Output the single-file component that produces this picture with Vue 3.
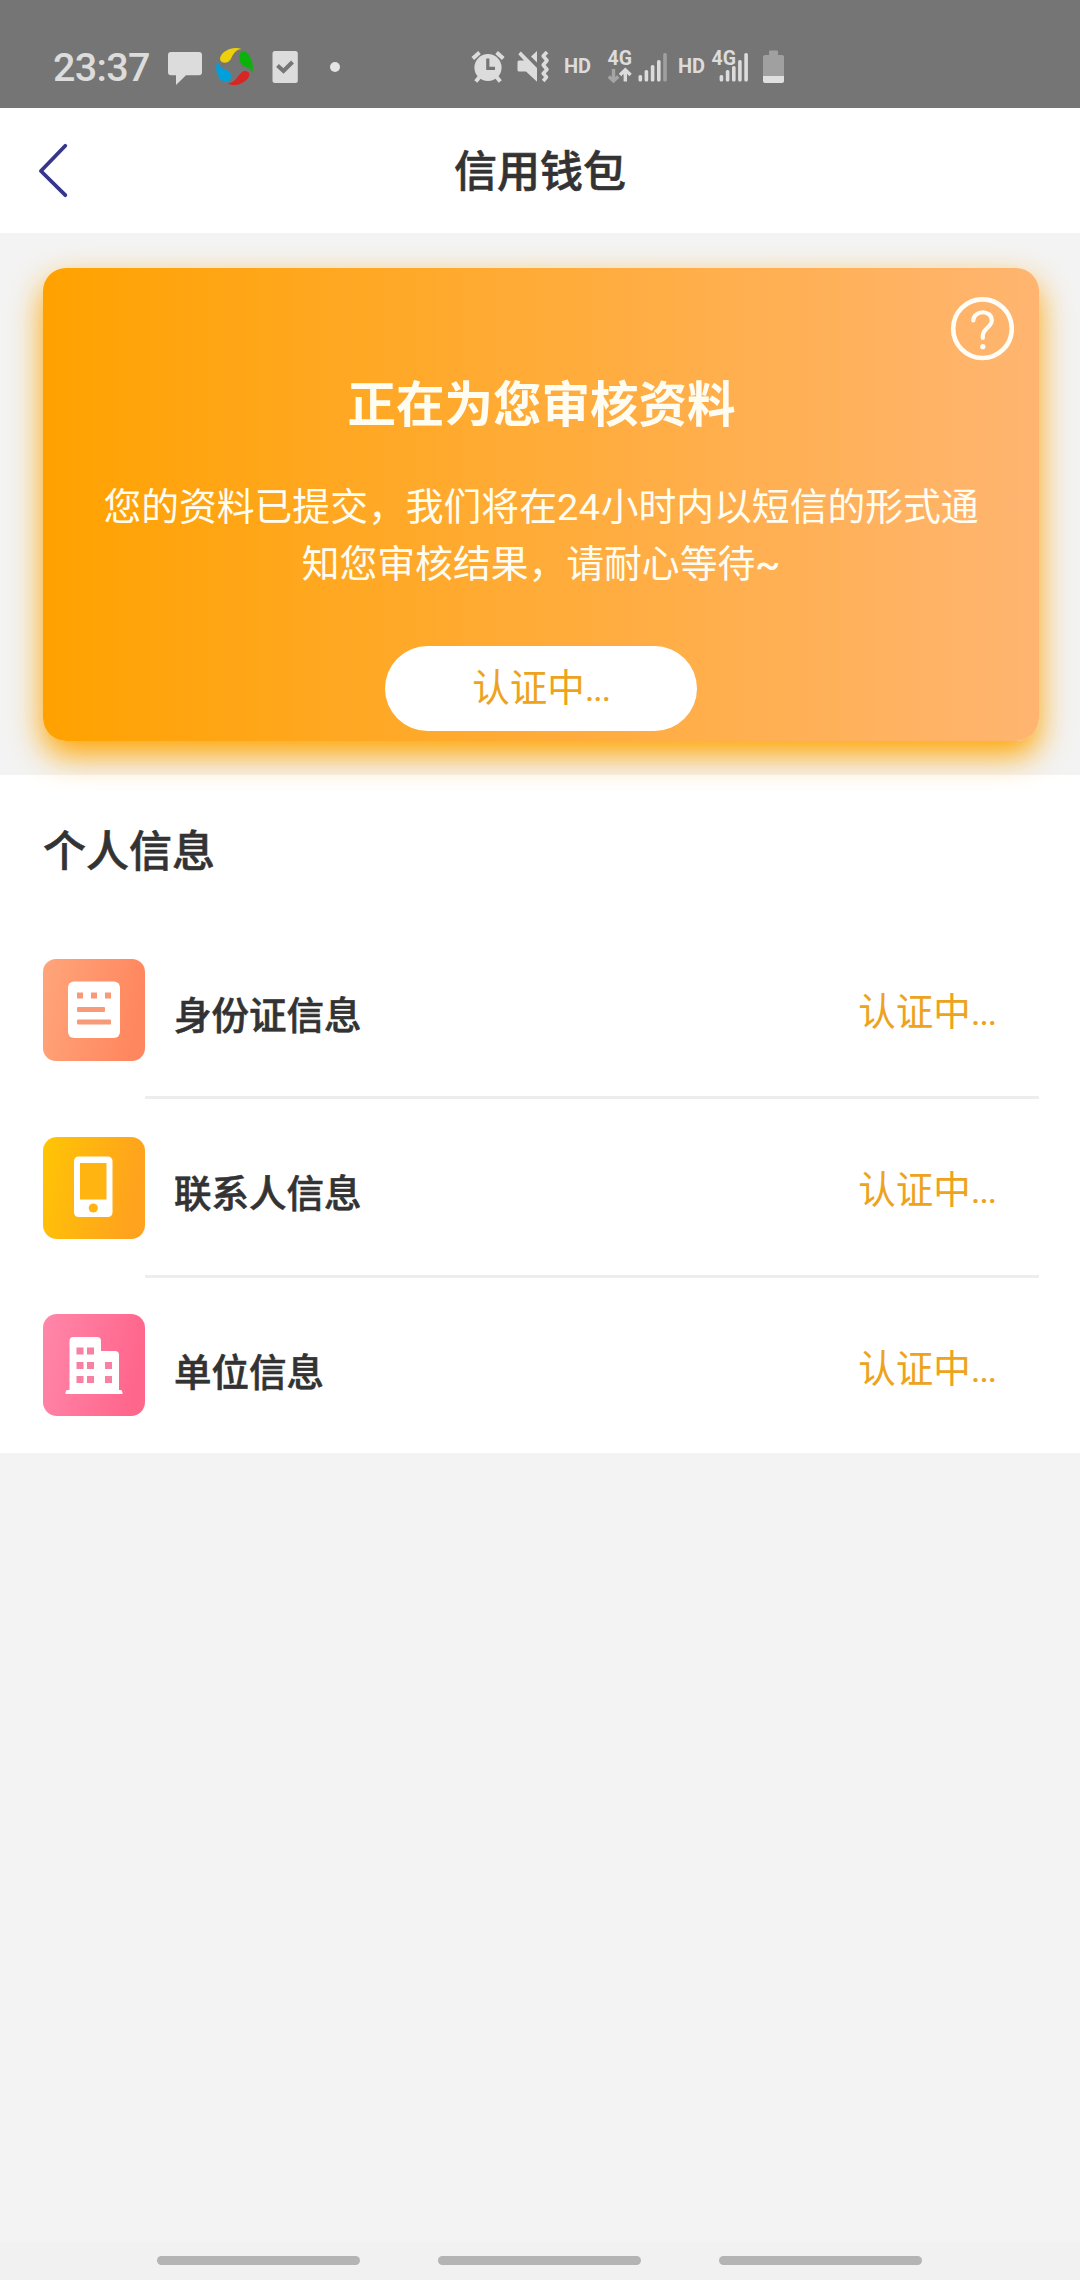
<script setup>
const rows = [
  { key: 'id', label: '身份证信息' },
  { key: 'contact', label: '联系人信息' },
  { key: 'company', label: '单位信息' },
]
</script>

<template>
  <div class="page">
    <div class="status-bar">
      <span class="time">23:37</span>
      <svg class="bubble" width="36" height="40" viewBox="167 48 36 40">
        <path d="M171 52H199Q202 52 202 55V72Q202 75.300 199 75.300H186L176 85V75.300H171Q168 75.300 168 72V55Q168 52 171 52Z" fill="#dcdcdc" />
      </svg>
      <svg class="wheel" width="40" height="40" viewBox="215 48 40 40">
        <path d="M241.500 49C234 46 222.500 50 220.200 57.500C218.800 63 227 65 230.500 59.500C233 55.500 234 50 241.500 49Z" fill="#ebd00b" />
        <path d="M239.500 55C240 50.500 245.500 50.500 248.500 54.500C252.500 60 254 67.500 252 73.500C251 67 247 68.500 243 65.500C239.500 62.500 239 59 239.500 55Z" fill="#0cb20c" />
        <path d="M228 83.500C234 87 243.500 84.500 248.500 77.500C251.500 72.500 246 69 241.500 72.500C237 76.500 236 82 228 83.500Z" fill="#d82626" />
        <path d="M217.800 60.500C214.500 67.500 216.500 76.500 222.500 81C227.500 84 231.500 80 231 75.500C230 69.500 225 70.500 221.500 67.500C219 65.500 218 63.500 217.800 60.500Z" fill="#00a0dc" />
      </svg>
      <svg class="task" width="28" height="40" viewBox="271 48 28 40">
        <rect x="272.500" y="51" width="25.300" height="32" rx="2.500" fill="#dcdcdc" />
        <path d="M277.500 65.500L283.500 71L292.500 62" fill="none" stroke="#757575" stroke-width="4" />
      </svg>
      <span class="dot"></span>
      <svg class="alarm" width="36" height="40" viewBox="470 48 36 40">
        <g fill="none" stroke="#dcdcdc" stroke-width="4">
          <path d="M472.800 58.500L479.500 52.500M503.300 58.500L496.600 52.500M479.500 77L475.800 81.500M496.600 77L500.300 81.500" />
        </g>
        <circle cx="488" cy="67.500" r="13.600" fill="#dcdcdc" />
        <path d="M487.800 58.500V68.300H495" fill="none" stroke="#757575" stroke-width="3.200" />
      </svg>
      <svg class="mute" width="36" height="40" viewBox="515 48 36 40">
        <path d="M517.500 62Q517.500 60.500 519 60.500H524L518.300 54.200L520.800 51.500L537 68V81.700L526 71.500H519Q517.500 71.500 517.500 70Z M531 56.500L537 51V62.500Z" fill="#dcdcdc" />
        <path d="M547 52L543.200 56L547 60.500L543.200 65L547 69.500L543.200 73.500L546.500 77L543.200 81" fill="none" stroke="#dcdcdc" stroke-width="3.600" stroke-linejoin="round" />
      </svg>
      <span class="hd">HD</span>
      <svg class="signal-a" width="62" height="40" viewBox="606 48 62 40">
        <text x="607.500" y="64.700" class="net">4G</text>
        <path d="M613.500 69V81M608.800 76.500L613.500 81L618.200 76.500" fill="none" stroke="#a5a5a5" stroke-width="3.400" />
        <path d="M625.300 81.500V70M620 75L625.300 69.800L630.600 75" fill="none" stroke="#dcdcdc" stroke-width="3.400" />
        <g fill="#dcdcdc">
          <rect x="638.500" y="75" width="3.600" height="6.500" rx="1.600" />
          <rect x="644.600" y="70" width="3.600" height="11.500" rx="1.600" />
          <rect x="650.800" y="65" width="3.600" height="16.500" rx="1.600" />
          <rect x="657" y="60" width="3.600" height="21.500" rx="1.600" />
          <rect x="663.200" y="53" width="3.600" height="28.500" rx="1.600" fill="#a0a0a0" />
        </g>
      </svg>
      <span class="hd second">HD</span>
      <svg class="signal-b" width="42" height="40" viewBox="709 48 42 40">
        <text x="711.500" y="64.700" class="net">4G</text>
        <g fill="#dcdcdc">
          <rect x="719.600" y="75" width="3.600" height="6.500" rx="1.600" />
          <rect x="725.800" y="70" width="3.600" height="11.500" rx="1.600" />
          <rect x="732" y="66" width="3.600" height="15.500" rx="1.600" />
          <rect x="738.100" y="60" width="3.600" height="21.500" rx="1.600" />
          <rect x="744.300" y="53" width="3.600" height="28.500" rx="1.600" />
        </g>
      </svg>
      <svg class="battery" width="24" height="40" viewBox="761 48 24 40">
        <path d="M763 57Q763 55 765 55H769V51.500Q769 50.500 770 50.500H777Q778 50.500 778 51.500V55H782Q784 55 784 57V76H763Z" fill="#a0a0a0" />
        <path d="M763 76H784V81Q784 83 782 83H765Q763 83 763 81Z" fill="#e0e0e0" />
      </svg>
    </div>

    <header class="nav">
      <svg class="back" width="32" height="56" viewBox="37 143 32 56">
        <path d="M65.300 145.800L40.900 171L65.300 195.200" fill="none" stroke="#36368c" stroke-width="3.800" stroke-linecap="round" stroke-linejoin="round" />
      </svg>
      <h1>信用钱包</h1>
    </header>

    <section class="hero">
      <div class="card">
        <svg class="help" width="64" height="64" viewBox="0 0 64 64">
          <g fill="none" stroke="#fffdf6" stroke-linecap="round">
            <circle cx="32.500" cy="31.700" r="29.300" stroke-width="4.600" />
            <path d="M23.300 23.500C23.800 12.500 42 12.500 41.800 23.500C41.500 30.500 32.800 31.500 32.800 38.500V41" stroke-width="4.200" />
          </g>
          <circle cx="32.800" cy="49.700" r="2.600" fill="#fffdf6" />
        </svg>
        <h2>正在为您审核资料</h2>
        <p>您的资料已提交，我们将在<span class="num">24</span>小时内以短信的形式通<br />知您审核结果，请耐心等待<span class="tilde">~</span></p>
        <button type="button">认证中<span class="dots">...</span></button>
      </div>
    </section>

    <section class="info">
      <h3>个人信息</h3>
      <div v-for="row in rows" :key="row.key" class="row">
        <svg v-if="row.key === 'id'" class="icon" viewBox="0 0 102 102">
          <defs>
            <linearGradient id="g-id" x1="0" y1="0" x2="1" y2="0.200">
              <stop offset="0" stop-color="#ffa57a" />
              <stop offset="1" stop-color="#ff875f" />
            </linearGradient>
          </defs>
          <rect width="102" height="102" rx="13" fill="url(#g-id)" />
          <rect x="25" y="22.500" width="52" height="56.500" rx="6" fill="#fff" />
          <g fill="#f79a78">
            <rect x="34" y="33.500" width="6" height="6" />
            <rect x="48" y="33.500" width="6" height="6" />
            <rect x="62" y="33.500" width="6" height="6" />
            <rect x="34" y="48" width="28" height="5" rx="1" />
            <rect x="34" y="60.500" width="34" height="5" rx="1" />
          </g>
        </svg>
        <svg v-else-if="row.key === 'contact'" class="icon" viewBox="0 0 102 102">
          <defs>
            <linearGradient id="g-contact" x1="0" y1="0" x2="1" y2="0.200">
              <stop offset="0" stop-color="#ffc504" />
              <stop offset="1" stop-color="#ffa21e" />
            </linearGradient>
          </defs>
          <rect width="102" height="102" rx="14" fill="url(#g-contact)" />
          <rect x="31" y="19.500" width="38.500" height="60.500" rx="4.500" fill="#fff" />
          <rect x="37" y="26" width="26.500" height="36.500" fill="#ffb411" />
          <circle cx="50.300" cy="71" r="4.600" fill="#ffb411" />
        </svg>
        <svg v-else class="icon" viewBox="0 0 102 102">
          <defs>
            <linearGradient id="g-company" x1="0" y1="0" x2="1" y2="0.200">
              <stop offset="0" stop-color="#ff87aa" />
              <stop offset="1" stop-color="#ff668c" />
            </linearGradient>
          </defs>
          <rect width="102" height="102" rx="14" fill="url(#g-company)" />
          <path d="M26.500 76V27Q26.500 23 30.500 23H54Q58 23 58 27V37H72Q76 37 76 41V76H77.500Q79.500 76 79.500 80H22.500Q22.500 76 24.500 76Z" fill="#fff" />
          <g fill="#f880a2">
            <rect x="33.500" y="33.500" width="7" height="7" />
            <rect x="44" y="33.500" width="7" height="7" />
            <rect x="33.500" y="48" width="7" height="7" />
            <rect x="44" y="48" width="7" height="7" />
            <rect x="62" y="48" width="7" height="7" />
            <rect x="33.500" y="62" width="7" height="7" />
            <rect x="44" y="62" width="7" height="7" />
            <rect x="62" y="62" width="7" height="7" />
          </g>
        </svg>
        <div class="cell">
          <span class="label">{{ row.label }}</span>
          <span class="state">认证中<span class="dots">...</span></span>
        </div>
      </div>
    </section>

    <div class="spacer"></div>

    <footer class="gesture">
      <i></i><i></i><i></i>
    </footer>
  </div>
</template>

<style>
body {
  background: #f3f3f3;
}
</style>

<style scoped>
.page {
  display: flex;
  flex-direction: column;
  width: 1080px;
  height: 2280px;
  background: #f3f3f3;
  font-family: Roboto, 'Noto Sans CJK SC', sans-serif;
  color: #333;
  overflow: hidden;
}
h1, h2, h3, p {
  margin: 0;
}
svg {
  display: block;
  flex: none;
}
.status-bar {
  display: flex;
  align-items: flex-start;
  height: 60px;
  padding-top: 48px;
  background: #757575;
  color: #dcdcdc;
  flex: none;
}
.time {
  width: 114px;
  margin-left: 53px;
  font-size: 39.5px;
  line-height: 40px;
  font-weight: 500;
  letter-spacing: -0.7px;
  white-space: nowrap;
}
.wheel { margin-left: 12px; }
.task { margin-left: 16px; }
.dot {
  width: 10px;
  height: 10px;
  margin: 14px 0 0 31px;
  border-radius: 50%;
  background: #e4e4e4;
}
.alarm { margin-left: 130px; }
.mute { margin-left: 9px; }
.hd {
  width: 42px;
  margin-left: 13px;
  font-size: 20px;
  line-height: 36px;
  font-weight: 700;
}
.hd.second {
  width: 31px;
  margin-left: 10px;
}
.net {
  font-size: 19.5px;
  font-weight: 700;
  fill: #dcdcdc;
}
.battery { margin-left: 10px; }

.nav {
  display: grid;
  grid-template-columns: 100px 1fr 100px;
  align-items: center;
  height: 125px;
  background: #fff;
  flex: none;
}
.back { margin-left: 37px; }
h1 {
  padding-top: 3px;
  font-size: 43px;
  line-height: 60px;
  font-weight: 500;
  text-align: center;
  -webkit-text-stroke: 0.6px #333;
}

.hero {
  padding: 35px 41px 34px 43px;
  flex: none;
}
.card {
  position: relative;
  display: flex;
  flex-direction: column;
  align-items: center;
  box-sizing: border-box;
  height: 473px;
  padding-top: 103px;
  border-radius: 23px;
  background: linear-gradient(90deg, #ffa200, #ffb571);
  box-shadow: 0 14px 32px #ffa500;
  color: #fffdf2;
  text-align: center;
}
.help {
  position: absolute;
  top: 29px;
  right: 25px;
}
h2 {
  padding-left: 1px;
  font-size: 48.5px;
  line-height: 70px;
  font-weight: 700;
}
p {
  margin-top: 38px;
  font-size: 37.8px;
  line-height: 56.5px;
  white-space: nowrap;
}
.num { letter-spacing: 0.6px; }
.tilde { font-weight: 500; }
.dots { letter-spacing: -1.5px; }
button {
  width: 312px;
  height: 85px;
  margin-top: 54px;
  padding: 0;
  border: 0;
  border-radius: 43px;
  background: #fff;
  color: #eda31d;
  font: 37.5px/85px Roboto, 'Noto Sans CJK SC', sans-serif;
}

.info {
  height: 678px;
  background: #fff;
  box-shadow: none;
  flex: none;
}
h3 {
  padding: 47px 0 39px 43px;
  font-size: 43px;
  line-height: 60px;
  font-weight: 500;
  -webkit-text-stroke: 0.6px #333;
}
.row {
  display: flex;
  align-items: flex-start;
  height: 178px;
  padding: 0 41px 0 43px;
}
.row:nth-of-type(2) { height: 179px; }
.row:nth-of-type(3) { height: 175px; }
.icon {
  width: 102px;
  height: 102px;
  margin-top: 38px;
}
.row:nth-of-type(3) .icon { margin-top: 36px; }
.cell {
  display: flex;
  justify-content: space-between;
  align-items: flex-start;
  flex: 1;
  box-sizing: border-box;
  height: 100%;
  padding: 61px 43px 0 29px;
  border-bottom: 3px solid #ededed;
  font-size: 37.5px;
  line-height: 60px;
}
.row:last-child .cell { border-bottom: 0; }
.label {
  margin-top: 4px;
  font-weight: 500;
  -webkit-text-stroke: 0.6px #333;
}
.state {
  color: #eda31d;
}
.spacer { flex: 1; }
.gesture {
  display: flex;
  gap: 78px;
  box-sizing: border-box;
  height: 38px;
  padding: 14px 0 0 157px;
  background: #f1f1f1;
  flex: none;
}
.gesture i {
  width: 203px;
  height: 9px;
  border-radius: 4.5px;
  background: #b4b4b4;
}
</style>
